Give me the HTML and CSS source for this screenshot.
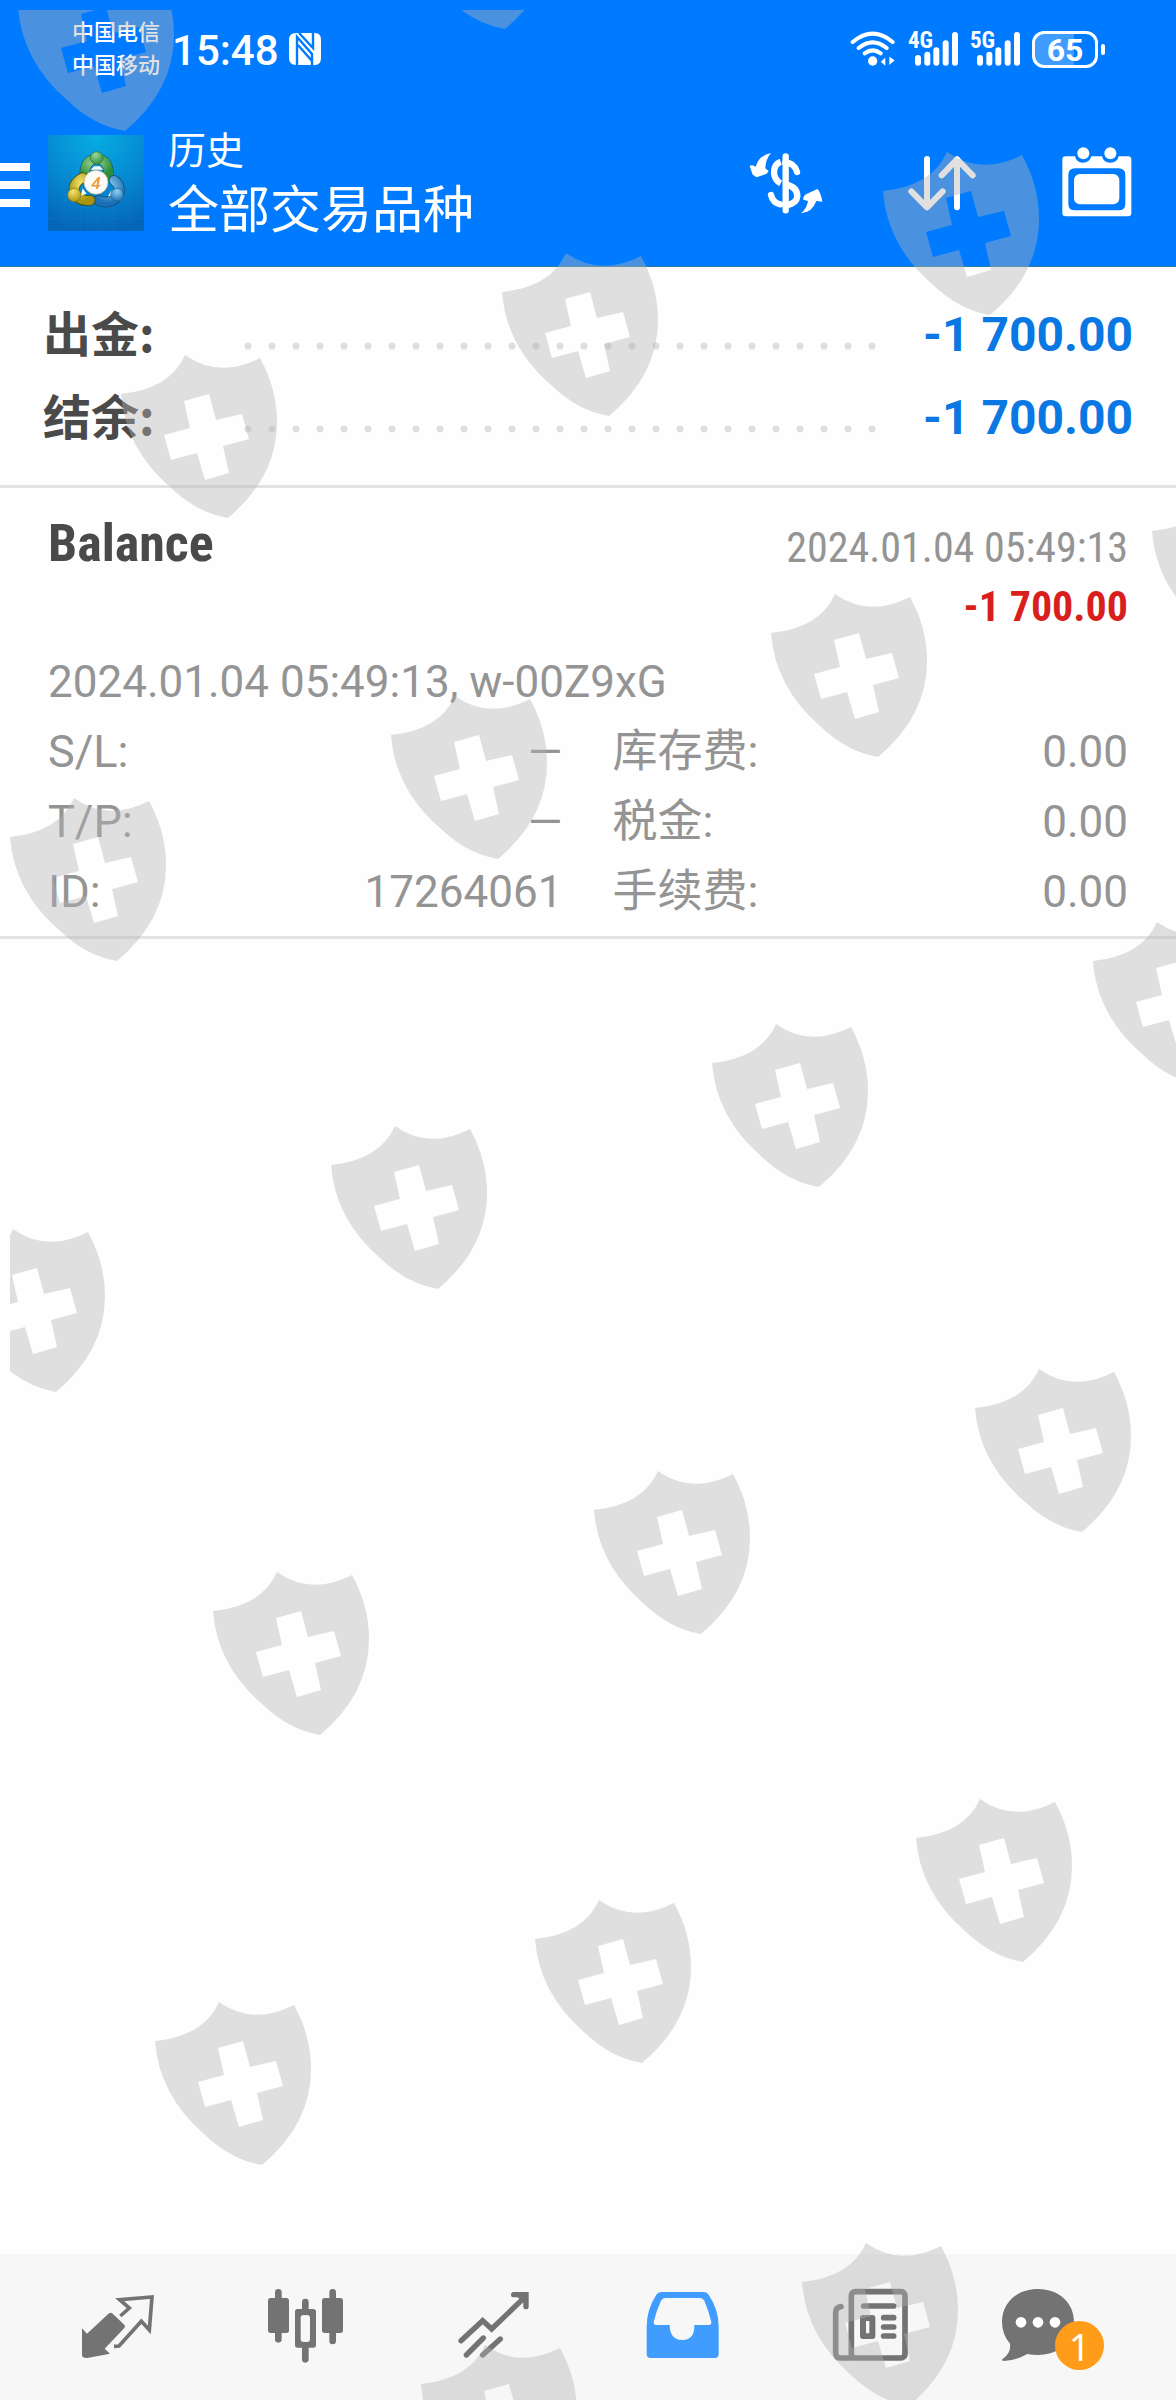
FILE: index.html
```
<!DOCTYPE html>
<html lang="zh-CN">
<head>
    <meta charset="UTF-8">
    <meta name="viewport" content="width=device-width, initial-scale=1.0">
    <title>历史 - 全部交易品种</title>
    <link rel="stylesheet" href="styles.css">
</head>
<body>
    <div class="status-bar">
        <div class="carriers">
            <span>中国电信</span>
            <span>中国移动</span>
        </div>
        <span class="clock">15:48</span>
        <svg class="nfc" width="32" height="32" viewBox="0 0 32 32">
            <path fill="#fff" d="M7 0h19q6 0 6 7v18q0 7-6 7H7q-7 0-7-7V7q0-7 7-7z"/>
            <path fill="none" stroke="#007aff" stroke-width="2.4" d="M8 32V4l15 17v11M10 0l14 15V0M9 12l14 16"/>
        </svg>

        <div class="signals">
            <svg width="46" height="36" viewBox="454 96 138 108">
                <g fill="none" stroke="#fff" stroke-width="12" stroke-linecap="round">
                    <path d="M462 129q60-50 120 0M480 147q42-34 84 0M498 163q24-18 48 0"/>
                </g>
                <circle cx="522" cy="186" r="14" fill="#fff"/>
                <path fill="#fff" d="M546 188l14-12v24zM588 184l-16-11v25z"/>
            </svg>
            <div class="cell">
                <span>4G</span>
                <svg width="43" height="34" viewBox="645 98 129 102">
                    <path stroke="#fff" stroke-width="18" stroke-linecap="round" d="M654 176v14M682 166v24M709 153v37M737 132v58M765 107v83"/>
                </svg>
            </div>
            <div class="cell">
                <span>5G</span>
                <svg width="43" height="34" viewBox="645 98 129 102">
                    <path stroke="#fff" stroke-width="18" stroke-linecap="round" d="M654 176v14M682 166v24M709 153v37M737 132v58M765 107v83"/>
                </svg>
            </div>
            <div class="battery">65</div>
        </div>
    </div>

    <header class="app-header">
        <button class="menu-btn" aria-label="菜单"><i></i><i></i><i></i></button>
        <svg class="logo" width="96" height="96" viewBox="24 30 288 288">
            <defs>
                <radialGradient id="logoBg" cx="50%" cy="0%" r="100%">
                    <stop offset="0" stop-color="#07aee4"/>
                    <stop offset="0.6" stop-color="#0585cf"/>
                    <stop offset="1" stop-color="#0566b8"/>
                </radialGradient>
                <radialGradient id="green" cx="40%" cy="25%" r="80%">
                    <stop offset="0" stop-color="#9fd694"/>
                    <stop offset="1" stop-color="#2c8d3c"/>
                </radialGradient>
                <radialGradient id="yellow" cx="40%" cy="25%" r="80%">
                    <stop offset="0" stop-color="#f4e66a"/>
                    <stop offset="1" stop-color="#a9930f"/>
                </radialGradient>
                <radialGradient id="blue" cx="50%" cy="25%" r="80%">
                    <stop offset="0" stop-color="#8fd0f2"/>
                    <stop offset="1" stop-color="#1b6fb5"/>
                </radialGradient>
            </defs>
            <rect x="24" y="30" width="288" height="288" fill="url(#logoBg)"/>
            <path stroke="#3fb0e8" stroke-opacity="0.15" stroke-width="2" d="M24 80h288M24 130h288M24 180h288M24 230h288M24 280h288M72 30v288M122 30v288M172 30v288M222 30v288M272 30v288"/>
            <g fill="none" stroke-linecap="round">
                <path stroke="#14617a" stroke-width="32" d="M134 152q0-50 36-50t36 50"/>
                <path stroke="url(#green)" stroke-width="27" d="M134 152q0-50 36-50t36 50"/>
                <path stroke="#14517a" stroke-width="32" d="M222 166q22 14 14 42-22 34-62 18"/>
                <path stroke="url(#blue)" stroke-width="27" d="M222 166q22 14 14 42-22 34-62 18"/>
                <path stroke="#42561c" stroke-width="32" d="M128 158q-32 18-24 44 10 28 46 24"/>
                <path stroke="url(#yellow)" stroke-width="27" d="M128 158q-32 18-24 44 10 28 46 24"/>
            </g>
            <path fill="#f4f8f2" d="M152 134l10-10h18l10 10zM122 212l6-22 12 16zM204 214l10-18 6 16z"/>
            <circle cx="170" cy="99" r="19" fill="url(#green)" stroke="#2d7440" stroke-width="2"/>
            <circle cx="103" cy="210" r="20" fill="url(#yellow)" stroke="#857713" stroke-width="2"/>
            <circle cx="231" cy="209" r="19" fill="url(#blue)" stroke="#25679d" stroke-width="2"/>
            <circle cx="168" cy="172" r="36" fill="#fdfbf8" stroke="#c9a27c" stroke-width="2"/>
            <text x="168" y="191" class="logo-digit">4</text>
        </svg>
        <div class="titles">
            <span class="subtitle">历史</span>
            <h1>全部交易品种</h1>
        </div>
        <div class="actions">
            <button aria-label="货币">
                <svg width="74" height="72" viewBox="147 440 222 216">
                    <g fill="none" stroke="#fff" stroke-width="19">
                        <path stroke-width="19" stroke-linecap="round" d="M257 468v162"/>
                        <path stroke-linecap="round" d="M291 515q-8-28-35-28"/>
                        <path d="M242 484q-21 8-20 34 2 22 20 31M260 553q32 8 32 35-2 22-31 26"/>
                        <path stroke-linecap="round" d="M213 584q6 24 28 28"/>
                    </g>
                    <path fill="#fff" d="M213 458q-16 18-17 46l10 8-6 8-30 11-12-8-9-26q8-6 18 2 10-34 46-41zM303 639q17-14 21-37l-14-4q-2-10 8-16l34-16q10 8 15 38l-18-2q-12 34-46 37z"/>
                </svg>
            </button>
            <button aria-label="排序">
                <svg width="72" height="72" viewBox="618 440 216 216">
                    <path fill="none" stroke="#fff" stroke-width="18" stroke-linecap="round" stroke-linejoin="round" d="M681 476v144M634 573l47 48 47-48M771 621V477M725 525l46-48 47 48"/>
                </svg>
            </button>
            <button aria-label="日期">
                <svg width="72" height="72" viewBox="1082 440 216 216">
                    <path fill="#fff" fill-rule="evenodd" d="M1096 468h28q4 19 24 19t25-19h32q4 19 25 19t25-19h28q10 0 10 10v160q0 10-10 10h-187q-10 0-10-10V478q0-10 10-10zM1124 504q-20 0-20 20v86q0 20 20 20h130q21 0 21-20v-86q0-20-21-20z"/>
                    <rect x="1121" y="521" width="136" height="91" rx="18" fill="#fff"/>
                    <circle cx="1149" cy="459" r="18" fill="#fff"/>
                    <circle cx="1230" cy="459" r="18" fill="#fff"/>
                </svg>
            </button>
        </div>
    </header>

    <main>
        <!-- Totals -->
        <section class="summary">
            <div class="summary-row">
                <span class="label">出金:</span>
                <span class="dots"></span>
                <span class="value">-1 700.00</span>
            </div>
            <div class="summary-row">
                <span class="label">结余:</span>
                <span class="dots"></span>
                <span class="value">-1 700.00</span>
            </div>
        </section>

        <!-- Operation details -->
        <section class="deal">
            <div class="deal-head">
                <h2>Balance</h2>
                <div class="deal-sum">
                    <span class="deal-date">2024.01.04 05:49:13</span>
                    <span class="deal-amount">-1 700.00</span>
                </div>
            </div>
            <p class="deal-comment">2024.01.04 05:49:13, w-00Z9xG</p>
            <table class="deal-table">
                <colgroup>
                    <col class="col-label">
                    <col class="col-value">
                    <col class="col-fee">
                    <col>
                </colgroup>
                <tr>
                    <th scope="row">S/L:</th><td>—</td>
                    <th scope="row">库存费:</th><td>0.00</td>
                </tr>
                <tr>
                    <th scope="row">T/P:</th><td>—</td>
                    <th scope="row">税金:</th><td>0.00</td>
                </tr>
                <tr>
                    <th scope="row">ID:</th><td>17264061</td>
                    <th scope="row">手续费:</th><td>0.00</td>
                </tr>
            </table>
        </section>
    </main>

    <nav class="tab-bar">
        <button aria-label="行情">
            <svg width="76" height="76" viewBox="60 36 228 228">
                <path fill="#737373" d="M66 160l15 16 66-61q6-4 11 1l35 33q4 5 0 10l-59 62 16 15-68 13q-15 1-16-8z"/>
                <path fill="none" stroke="#737373" stroke-width="11" d="M181 123l27-24-29-25 97-8-8 99-24-26-67 74-15 1"/>
            </svg>
        </button>
        <button aria-label="图表">
            <svg width="76" height="76" viewBox="624 36 228 228">
                <path stroke="#737373" stroke-width="20" stroke-linecap="round" d="M655 52v141M818 52v146M736 81v30M736 215v38"/>
                <rect x="624" y="69" width="63" height="105" rx="8" fill="#737373"/>
                <rect x="786" y="69" width="63" height="105" rx="8" fill="#737373"/>
                <path fill="#737373" fill-rule="evenodd" d="M713 102h47q8 0 8 8v100q0 8-8 8h-47q-8 0-8-8V110q0-8 8-8zM731 120q-9 0-9 9v63q0 9 9 9h10q9 0 9-9v-63q0-9-9-9z"/>
            </svg>
        </button>
        <button aria-label="交易">
            <svg width="76" height="76" viewBox="1188 36 228 228">
                <g fill="none" stroke="#737373" stroke-width="16" stroke-linecap="round">
                    <path d="M1203 197l65-60 27 25 102-98"/>
                    <path d="M1361 59h37v36"/>
                    <path d="M1219 240l51-51M1268 240l53-48"/>
                </g>
                <path fill="#737373" d="M1368 62h34v32z"/>
            </svg>
        </button>
        <button class="active" aria-label="历史">
            <svg width="76" height="76" viewBox="42 36 228 228">
                <path fill="#409cff" fill-rule="evenodd" d="M94 51h128q9 0 14 8 30 44 30 96v82q0 12-12 12H62q-12 0-12-12v-82q0-52 29-96 5-8 15-8zM106 69q-9 0-13 8-14 30-22 64-1 9 8 9h40q0 44 38 45 38-1 36-45h43q9 0 8-9-8-34-21-64-4-8-13-8z"/>
            </svg>
        </button>
        <button aria-label="新闻">
            <svg width="76" height="76" viewBox="610 36 228 228">
                <g fill="none" stroke="#737373" stroke-width="17" stroke-linecap="round">
                    <rect x="668" y="50" width="161" height="199" rx="12"/>
                    <path d="M637 95q-16 2-16 18v120q0 16 16 16h33"/>
                    <path d="M705 93h90M765 128h30M765 156h30M765 183h30"/>
                </g>
                <path fill="#737373" fill-rule="evenodd" d="M703 120h28q9 0 9 9v54q0 9-9 9h-28q-9 0-9-9v-54q0-9 9-9zM712 138v37h10v-37z"/>
            </svg>
        </button>
        <button class="messages" aria-label="消息">
            <svg width="112" height="76" viewBox="1116 36 336 228">
                <path fill="#737373" d="M1224 42c64 0 108 42 108 99s-44 99-108 99q-18 0-32-3-38 21-71 21-6 0-4-5 27-18 23-47-24-28-24-65c0-57 44-99 108-99z"/>
                <g fill="#fff">
                    <circle cx="1173" cy="142" r="16"/>
                    <circle cx="1224" cy="142" r="16"/>
                    <circle cx="1275" cy="142" r="16"/>
                </g>
            </svg>
            <span class="badge">1</span>
        </button>
    </nav>

    <!-- Shield watermark over the whole screen -->
    <svg class="watermark" viewBox="0 0 1176 2400" preserveAspectRatio="xMinYMin slice" aria-hidden="true">
        <defs>
            <clipPath id="inset"><rect x="10" y="10" width="1166" height="2390"/></clipPath>
            <path id="shield" fill-rule="evenodd" d="M0 39Q49 34 64 0Q98 24 139 3Q156 34 156 67Q156 122 107 163Q76 158 49 132Q4 93 0 39ZM63 46L69 73L43 80L50 105L76 98L84 125L108 118L102 91L128 84L121 59L95 65L88 39Z"/>
        </defs>
        <g clip-path="url(#inset)">
            <use href="#shield" x="18" y="-32"/>
            <use href="#shield" x="398" y="-134"/>
            <use href="#shield" x="883" y="152"/>
            <use href="#shield" x="502" y="253"/>
            <use href="#shield" x="121" y="355"/>
            <use href="#shield" x="1152" y="492"/>
            <use href="#shield" x="771" y="594"/>
            <use href="#shield" x="391" y="696"/>
            <use href="#shield" x="10" y="798"/>
            <use href="#shield" x="1093" y="922"/>
            <use href="#shield" x="712" y="1024"/>
            <use href="#shield" x="331" y="1126"/>
            <use href="#shield" x="-51" y="1229"/>
            <use href="#shield" x="975" y="1369"/>
            <use href="#shield" x="594" y="1471"/>
            <use href="#shield" x="213" y="1572"/>
            <use href="#shield" x="916" y="1799"/>
            <use href="#shield" x="535" y="1900"/>
            <use href="#shield" x="155" y="2002"/>
            <use href="#shield" x="802" y="2243"/>
            <use href="#shield" x="421" y="2345"/>
        </g>
    </svg>
</body>
</html>
```
FILE: styles.css
```
* {
    margin: 0;
    padding: 0;
    box-sizing: border-box;
}

body {
    position: relative;
    min-height: 100vh;
    display: flex;
    flex-direction: column;
    overflow-x: hidden;
    background: #fefefe;
    color: #949494;
    font-family: Roboto, "Noto Sans CJK SC", sans-serif;
}

button {
    border: none;
    background: none;
    cursor: pointer;
}

svg {
    display: block;
    flex-shrink: 0;
}

/* Status bar */
.status-bar {
    display: flex;
    align-items: center;
    height: 98px;
    padding: 0 78px 0 72px;
    background: #007aff;
    color: #fff;
}

.carriers {
    display: flex;
    flex-direction: column;
    font-size: 22px;
    font-weight: 500;
    line-height: 33px;
}

.clock {
    margin-left: 12px;
    padding-top: 2px;
    font-size: 42px;
    font-weight: 500;
}

.nfc {
    margin-left: 10px;
}

.signals {
    display: flex;
    align-items: center;
    gap: 12px;
    margin-left: auto;
}

.cell {
    position: relative;
    padding-left: 7px;
}

.cell span {
    position: absolute;
    top: -2px;
    left: 0;
    font-family: "Roboto Condensed", Roboto, sans-serif;
    font-size: 23px;
    font-weight: 700;
    line-height: 22px;
}

.battery {
    position: relative;
    width: 66px;
    height: 37px;
    border: 3px solid #fff;
    border-radius: 12px;
    background: linear-gradient(90deg, #409cff 65%, #007aff 65%);
    font-size: 32px;
    font-weight: 700;
    line-height: 33px;
    text-align: center;
}

.battery::after {
    content: '';
    position: absolute;
    top: 10px;
    right: -10px;
    width: 4px;
    height: 11px;
    border-radius: 2px;
    background: #fff;
}

/* Header */
.app-header {
    display: flex;
    align-items: center;
    height: 169px;
    padding: 2px 43px 0 0;
    border-bottom: 1px solid #2b7d9d;
    background: #007aff;
    color: #fff;
}

.menu-btn {
    display: flex;
    flex-direction: column;
    gap: 10px;
    width: 30px;
    padding-top: 3px;
}

.menu-btn i {
    height: 8px;
    background: #fff;
}

.logo {
    margin-left: 18px;
}

.logo-digit {
    fill: #ee9a3d;
    font-size: 52px;
    font-style: italic;
    font-weight: 500;
    text-anchor: middle;
}

.titles {
    margin-left: 24px;
    white-space: nowrap;
}

.subtitle {
    display: block;
    font-size: 38px;
    line-height: 56px;
}

.titles h1 {
    font-size: 51px;
    font-weight: 400;
    line-height: 64px;
}

.actions {
    display: flex;
    gap: 83px;
    margin-left: auto;
}

/* Totals */
.summary {
    display: flex;
    flex-direction: column;
    gap: 13px;
    padding: 33px 43px 32px;
    border-bottom: 3px solid #e3e3e3;
}

.summary-row {
    display: flex;
    align-items: center;
    font-size: 48px;
    font-weight: 700;
    line-height: 70px;
}

.summary-row .label {
    width: 193px;
    padding-bottom: 8px;
    color: #4a4a4a;
    font-family: "Noto Sans CJK SC", sans-serif;
    font-size: 48px;
    line-height: 62px;
}

.summary-row .dots {
    flex: 1;
    height: 8px;
    margin: 22px 36px 0 0;
    background: radial-gradient(circle at 12px 4px, #dedede 3px, transparent 4px) 0 0 / 24px 8px repeat-x;
}

.summary-row .value {
    color: #0a78e3;
}

/* Operation */
.deal {
    padding: 22px 48px 9px;
    border-bottom: 3px solid #e3e3e3;
}

.deal-head {
    display: flex;
    justify-content: space-between;
    font-family: "Roboto Condensed", "Liberation Sans Narrow", Roboto, sans-serif;
}

.deal-head h2 {
    color: #4a4a4a;
    font-size: 52px;
    line-height: 68px;
}

.deal-sum {
    display: flex;
    flex-direction: column;
    align-items: flex-end;
    font-size: 42px;
    line-height: 59px;
}

.deal-date {
    padding-top: 8px;
}

.deal-amount {
    color: #d91e1e;
    font-weight: 700;
}

.deal-comment {
    margin-top: 11px;
    font-size: 44px;
    line-height: 70px;
}

.deal-table {
    width: 100%;
    border-collapse: collapse;
    table-layout: fixed;
    font-size: 44px;
    line-height: 70px;
}

.col-label {
    width: 12%;
}

.col-value {
    width: 36%;
}

.col-fee {
    width: 25%;
}

.deal-table th {
    font-size: 45px;
    font-weight: 400;
    text-align: left;
}

.deal-table td {
    text-align: right;
}

.deal-table td:nth-child(2) {
    padding-right: 4px;
}

.deal-table td + th {
    padding-left: 46px;
}

/* Bottom tabs */
.tab-bar {
    display: flex;
    height: 146px;
    margin-top: auto;
    padding: 0 24px;
    background: #f7f7f7;
}

.tab-bar button {
    position: relative;
    flex: 1;
    display: flex;
    align-items: center;
    justify-content: center;
    padding-bottom: 4px;
}

.badge {
    position: absolute;
    top: 67px;
    left: calc(50% - 3px);
    width: 49px;
    height: 49px;
    border-radius: 50%;
    background: #ff9c1a;
    color: #fff;
    font-family: "Noto Sans", sans-serif;
    font-size: 38px;
    line-height: 50px;
    text-align: center;
}

.watermark {
    position: absolute;
    inset: 0;
    width: 100%;
    height: 100%;
    fill: rgba(180, 180, 180, 0.41);
    pointer-events: none;
}
```
